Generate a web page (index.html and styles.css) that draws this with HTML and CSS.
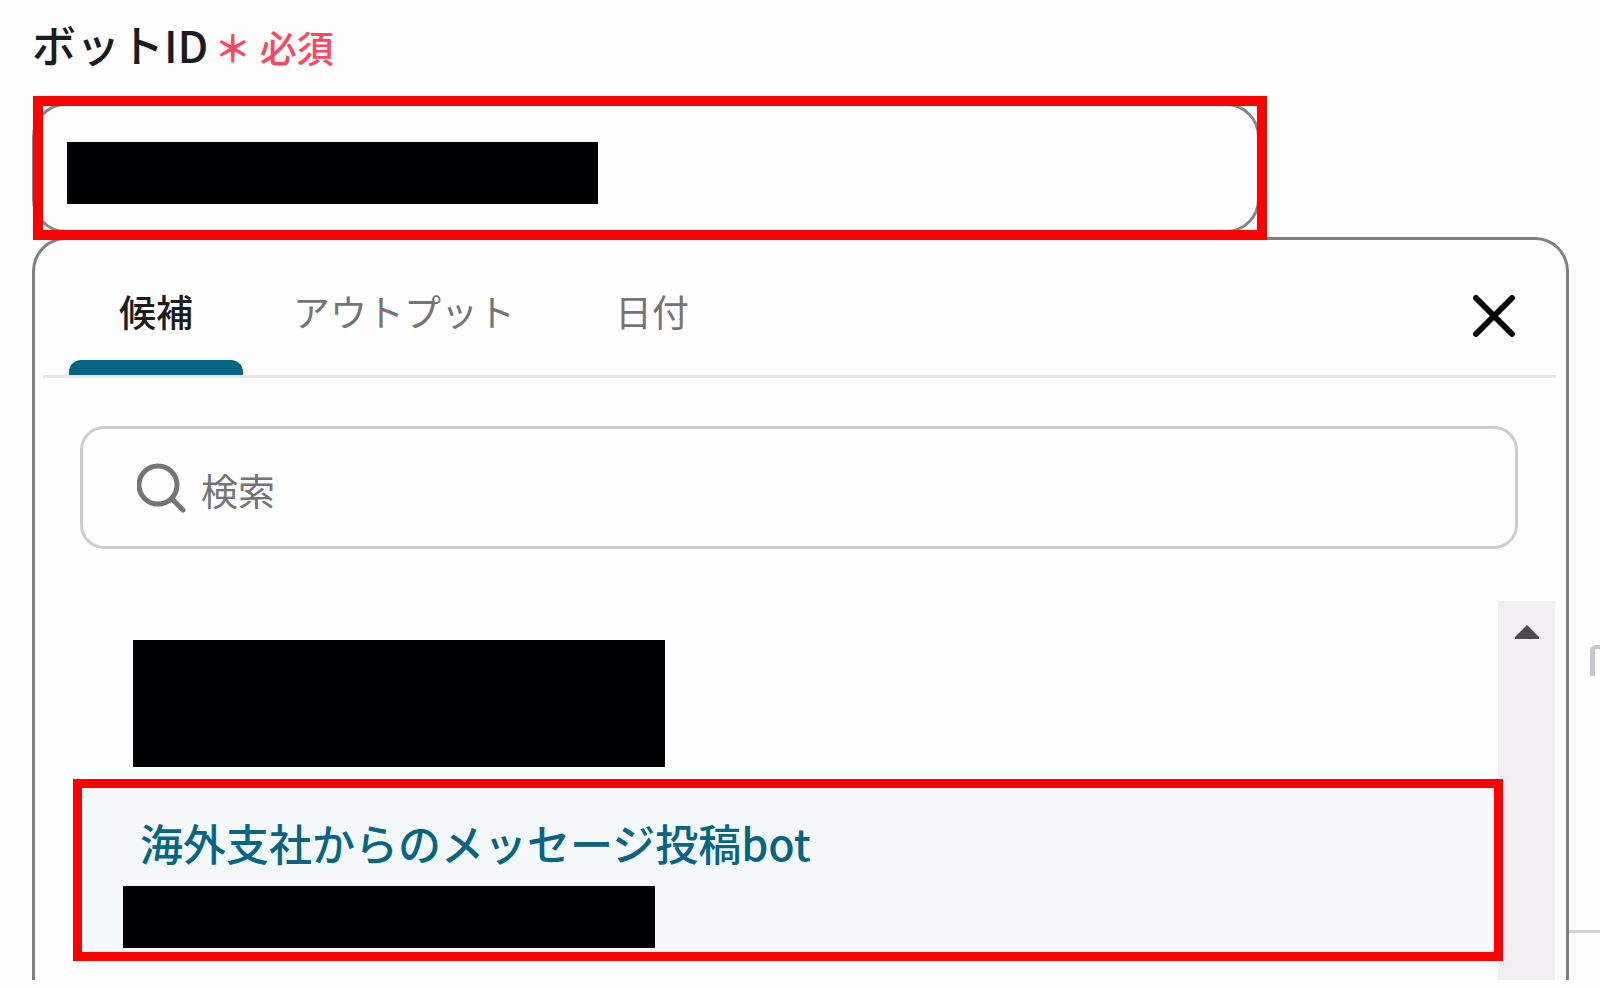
FILE: index.html
```
<!DOCTYPE html>
<html lang="ja">
<head>
<meta charset="utf-8">
<title>ボットID</title>
<link rel="stylesheet" href="styles.css">
</head>
<body>
<main class="page">
  <div class="label-row">
    <label class="label" for="bot-id">ボットID</label>
    <span class="required"><span class="asterisk">＊</span> 必須</span>
  </div>
  <div class="field">
    <input class="field-input" id="bot-id" type="text">
    <span class="redaction redaction-field"></span>
    <span class="highlight"></span>
  </div>
  <section class="panel">
    <div class="tab-bar">
      <div class="tabs" role="tablist">
        <button class="tab tab-active" type="button" role="tab" aria-selected="true">候補</button>
        <button class="tab" type="button" role="tab" aria-selected="false">アウトプット</button>
        <button class="tab" type="button" role="tab" aria-selected="false">日付</button>
      </div>
      <button class="close" type="button" aria-label="閉じる">
        <svg width="44" height="44" viewBox="0 0 44 44" fill="none" stroke="#050505" stroke-width="6" stroke-linecap="round"><path d="M4 4 40 40M40 4 4 40"/></svg>
      </button>
    </div>
    <div class="search">
      <svg width="50" height="50" viewBox="0 0 50 50" fill="none" stroke="#757376" stroke-width="5" stroke-linecap="round"><circle cx="21" cy="22" r="19"/><path d="M35 36 46 47"/></svg>
      <input class="search-input" type="search" placeholder="検索" aria-label="検索">
    </div>
    <div class="results">
      <ul class="options">
        <li><button class="option" type="button" aria-label="候補 1"><span class="redaction-block redaction-tall"></span></button></li>
        <li><button class="option option-selected" type="button"><span class="option-name">海外支社からのメッセージ投稿bot</span><span class="redaction-block redaction-short"></span><span class="highlight highlight-option"></span></button></li>
      </ul>
      <div class="scrollbar">
        <svg width="26" height="15" viewBox="0 0 26 15" fill="#4b494c"><path d="M13 1 25 13V15H1V13z"/></svg>
      </div>
    </div>
  </section>
  <span class="edge-corner"></span>
  <span class="edge-line"></span>
</main>
</body>
</html>
```
FILE: styles.css
```
* {
  box-sizing: border-box;
}

body {
  margin: 0;
  background: #fefefe;
  font-family: "Noto Sans CJK JP", sans-serif;
  color: #1c1b1e;
}

button,
input {
  font: inherit;
  color: inherit;
  background: none;
  border: 0;
  padding: 0;
  margin: 0;
}

.page {
  position: relative;
  padding: 0 31px 8px 32px;
  overflow: hidden;
}

.label-row {
  display: flex;
  align-items: center;
  gap: 6px;
  height: 96px;
  padding-bottom: 8px;
}

.label {
  font-size: 44px;
  font-weight: 500;
  line-height: 60px;
}

.required {
  padding-top: 6px;
  font-size: 37px;
  font-weight: 500;
  line-height: 60px;
  color: #ff4560;
}

.asterisk {
  font-weight: 700;
}

.field {
  position: relative;
  height: 144px;
  padding: 7px 7px 7px 0;
  margin-right: 302px;
}

.field-input {
  display: block;
  width: 100%;
  height: 100%;
  padding: 0 32px;
  border: 3px solid #868487;
  border-radius: 34px;
  font-size: 37px;
}

.highlight {
  position: absolute;
  inset: 0 0 0 1px;
  border: 10px solid #ff0000;
  pointer-events: none;
}

.redaction {
  position: absolute;
  background: #000002;
}

.redaction-field {
  left: 35px;
  top: 46px;
  width: 531px;
  height: 62px;
}

.panel {
  margin-top: -3px;
  border: 3px solid #807e81;
  border-bottom: 0;
  border-radius: 34px 34px 0 0;
}

.tab-bar {
  display: flex;
  align-items: center;
  justify-content: space-between;
  margin: 0 10px 0 8px;
  padding: 0 40px 0 26px;
  border-bottom: 3px solid #e8e6e9;
}

.tabs {
  display: flex;
}

.tab {
  position: relative;
  height: 135px;
  padding: 6px 50px 0;
  font-size: 37px;
  line-height: 54px;
  color: #757376;
}

.tab-active {
  font-weight: 500;
  color: #1c1b1e;
}

.tab-active::after {
  content: "";
  position: absolute;
  left: 0;
  right: 0;
  bottom: 0;
  height: 15px;
  border-radius: 12px 12px 0 0;
  background: #066582;
}

.close {
  display: flex;
  padding-top: 16px;
}

.search {
  display: flex;
  align-items: center;
  gap: 14px;
  height: 123px;
  margin: 48px 48px 0 45px;
  padding: 0 54px;
  border: 3px solid #cfccd0;
  border-radius: 24px;
}

.search-input {
  flex: 1;
  min-width: 0;
  padding-top: 4px;
  font-size: 37px;
  line-height: 54px;
}

.search-input::placeholder {
  color: #757376;
  opacity: 1;
}

.results {
  display: flex;
  margin: 52px 11px 0 38px;
}

.options {
  flex: 1;
  list-style: none;
  margin: 0;
  padding: 39px 0 19px;
}

.option {
  position: relative;
  display: block;
  width: 100%;
  padding: 0 0 12px 60px;
  text-align: left;
}

.option-selected {
  padding: 33px 0 13px 50px;
  background: #f5f9fc;
}

.option-name {
  display: block;
  height: 74px;
  padding-left: 17px;
  font-size: 43px;
  font-weight: 500;
  line-height: 60px;
  color: #066582;
}

.redaction-block {
  display: block;
  width: 532px;
  max-width: 100%;
  background: #000002;
}

.redaction-tall {
  height: 127px;
}

.redaction-short {
  height: 62px;
}

.highlight-option {
  inset: 0 -5px 0 0;
  border-width: 9px;
}

.scrollbar {
  display: flex;
  justify-content: center;
  width: 57px;
  padding-top: 23px;
  background: #f1eff2;
}

.edge-corner {
  position: absolute;
  right: 0;
  top: 645px;
  width: 10px;
  height: 31px;
  border: solid #c8c6ca;
  border-width: 4px 0 0 5px;
  border-radius: 6px 0 0 0;
}

.edge-line {
  position: absolute;
  right: 0;
  top: 930px;
  width: 31px;
  height: 3px;
  background: #d0d2de;
}
```
